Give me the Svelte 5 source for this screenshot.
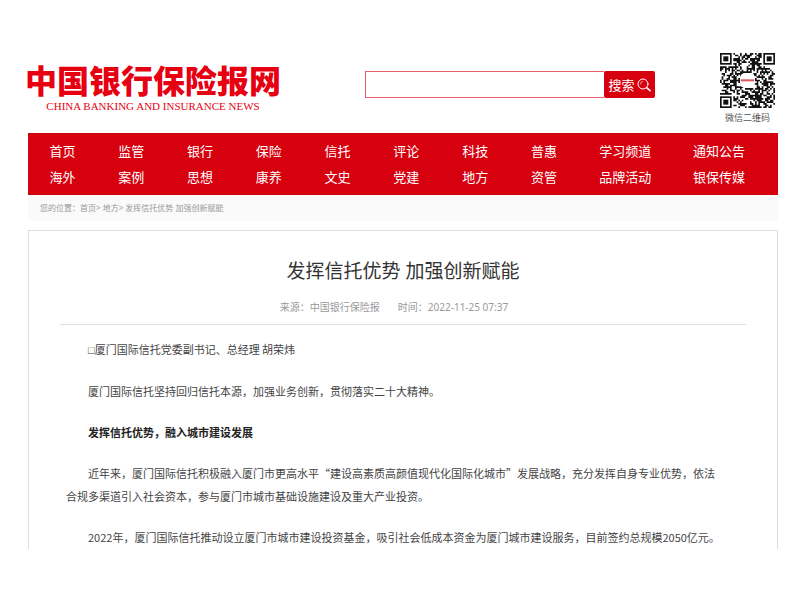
<script lang="ts">
  const navItems = [
    ['首页', '海外'],
    ['监管', '案例'],
    ['银行', '思想'],
    ['保险', '康养'],
    ['信托', '文史'],
    ['评论', '党建'],
    ['科技', '地方'],
    ['普惠', '资管'],
    ['学习频道', '品牌活动'],
    ['通知公告', '银保传媒'],
  ]

  const paragraphs = [
    { marker: '□', text: '厦门国际信托党委副书记、总经理 胡荣炜' },
    { text: '厦门国际信托坚持回归信托本源，加强业务创新，贯彻落实二十大精神。' },
    { text: '发挥信托优势，融入城市建设发展', strong: true },
    {
      text: '近年来，厦门国际信托积极融入厦门市更高水平“建设高素质高颜值现代化国际化城市”发展战略，充分发挥自身专业优势，依法合规多渠道引入社会资本，参与厦门市城市基础设施建设及重大产业投资。',
    },
    {
      text: '2022年，厦门国际信托推动设立厦门市城市建设投资基金，吸引社会低成本资金为厦门城市建设服务，目前签约总规模2050亿元。',
    },
  ]

  const QR = 33

  // Data modules, leaving the three finder corners and the centre badge free
  function qrPath() {
    let seed = 20221125
    let d = ''
    for (let y = 0; y < QR; y++) {
      for (let x = 0; x < QR; x++) {
        seed = (seed * 1103515245 + 12345) % 2147483648
        const corner =
          (x < 8 && y < 8) || (x >= QR - 8 && y < 8) || (x < 8 && y >= QR - 8)
        if (!corner && seed / 2147483648 > 0.48) d += `M${x} ${y}h1v1h-1z`
      }
    }
    return d
  }

  const modules = qrPath()
  const finders = [
    [0, 0],
    [QR - 7, 0],
    [0, QR - 7],
  ]

  let keyword = $state('')
</script>

<div class="page" lang="zh-CN">
  <header>
    <a class="logo" href="#home">
      <span class="logo-cn">中国银行保险报网</span>
      <span class="logo-en">CHINA BANKING AND INSURANCE NEWS</span>
    </a>

    <form class="search" onsubmit={(e) => e.preventDefault()}>
      <input type="text" aria-label="搜索" bind:value={keyword} />
      <button type="submit">
        搜索
        <svg viewBox="0 0 14 14" aria-hidden="true">
          <circle cx="6" cy="6" r="5" />
          <path d="M3.4 6a2.6 2.6 0 0 1 2.2-2.6" class="shine" />
          <path d="M9.6 9.6L13 12.6" class="handle" />
        </svg>
      </button>
    </form>

    <div class="wechat">
      <svg viewBox="0 0 33 33" aria-hidden="true">
        <path d={modules} />
        {#each finders as [x, y]}
          <rect {x} {y} width="7" height="7" />
          <rect x={x + 1} y={y + 1} width="5" height="5" class="blank" />
          <rect x={x + 2} y={y + 2} width="3" height="3" />
        {/each}
        <rect x="12" y="12" width="9" height="9" rx="3" class="blank" />
        <rect x="12.5" y="15.8" width="8" height="1.2" class="mark" />
      </svg>
      <span>微信二维码</span>
    </div>
  </header>

  <nav>
    {#each navItems as column}
      <div class="column">
        {#each column as item}
          <a href="#{item}">{item}</a>
        {/each}
      </div>
    {/each}
  </nav>

  <div class="crumbs">
    您的位置：<a href="#home">首页</a>&gt; <a href="#local">地方</a>&gt; 发挥信托优势 加强创新赋能
  </div>

  <article>
    <h1>发挥信托优势 加强创新赋能</h1>
    <div class="meta">
      <span>来源：中国银行保险报</span>
      <span>时间：2022-11-25 07:37</span>
    </div>
    <div class="content">
      {#each paragraphs as p}
        <p class:strong={p.strong}>
          {#if p.marker}<span class="marker">{p.marker}</span>{/if}{p.text}
        </p>
      {/each}
    </div>
  </article>
</div>

<style>
  :global(body) {
    margin: 0;
    background: #fff;
  }

  .page {
    padding: 53px 22px 0 28px;
    font-family: 'Noto Sans', 'Noto Sans CJK SC', sans-serif;
    color: #444;
  }

  a {
    color: inherit;
    text-decoration: none;
  }

  header {
    display: flex;
    align-items: flex-start;
    padding-right: 3px;
    height: 80px;
  }

  .logo {
    display: flex;
    flex-direction: column;
    align-items: center;
    margin-left: -3px;
    padding-top: 6px;
    color: #e60012;
    white-space: nowrap;
  }

  .logo-cn {
    font-family: 'Noto Sans CJK SC', sans-serif;
    font-size: 32px;
    font-weight: 900;
    line-height: 40px;
  }

  .logo-en {
    font-family: 'Liberation Serif', serif;
    font-size: 11px;
    line-height: 14px;
  }

  .search {
    display: flex;
    flex: 1;
    height: 27px;
    margin: 18px 65px 0 84px;
  }

  .search input {
    flex: 1;
    min-width: 0;
    box-sizing: border-box;
    padding: 0 8px;
    border: 1px solid #e8606a;
    border-right: 0;
    border-radius: 0;
    outline: none;
    font: inherit;
    font-size: 12px;
  }

  .search button {
    display: flex;
    align-items: center;
    justify-content: center;
    gap: 2px;
    width: 51px;
    padding: 0;
    border: 0;
    border-radius: 2px;
    background: #d7000f;
    color: #fff;
    font: inherit;
    font-size: 13px;
    line-height: 20px;
    white-space: nowrap;
  }

  .search svg {
    width: 14px;
    height: 14px;
    fill: none;
    stroke: #fff;
    stroke-width: 1;
    stroke-linecap: round;
  }

  .search .shine {
    stroke-width: 0.6;
  }

  .search .handle {
    stroke-width: 1.6;
  }

  .wechat {
    display: flex;
    flex-direction: column;
    align-items: center;
    font-size: 9px;
    line-height: 20px;
    color: #555;
  }

  .wechat svg {
    width: 55px;
    height: 55px;
    fill: #111;
  }

  .wechat .blank {
    fill: #fff;
  }

  .wechat .mark {
    fill: #e0555c;
  }

  nav {
    display: grid;
    grid-template-columns: repeat(8, 11fr) 15fr 15fr;
    padding: 5px 12px 5px 0;
    background: #d7000f;
    color: #fff;
    font-size: 13px;
    line-height: 26px;
  }

  .column {
    display: flex;
    flex-direction: column;
    align-items: center;
    white-space: nowrap;
  }

  .crumbs {
    padding: 0 12px;
    background: #fafafa;
    color: #999;
    font-size: 8px;
    line-height: 26px;
  }

  article {
    margin-top: 9px;
    padding: 0 31px;
    border: 1px solid #ddd;
    border-bottom: 0;
  }

  h1 {
    margin: 0;
    padding-top: 25px;
    font-size: 19px;
    font-weight: 400;
    line-height: 30px;
    text-align: center;
    color: #333;
  }

  .meta {
    display: flex;
    justify-content: center;
    gap: 18px;
    padding: 11px 18px 7px 0;
    border-bottom: 1px solid #ddd;
    color: #999;
    font-size: 10px;
    line-height: 20px;
  }

  .content {
    padding: 13px 22px 0 6px;
    font-family: 'Noto Sans CJK SC', sans-serif;
    font-size: 11px;
    line-height: 23px;
  }

  p {
    margin: 0 0 18px;
    text-indent: 2em;
  }

  p:last-child {
    margin: 0;
  }

  .marker {
    font-family: 'Liberation Sans', sans-serif;
  }

  .strong {
    font-weight: 700;
    color: #222;
  }
</style>
